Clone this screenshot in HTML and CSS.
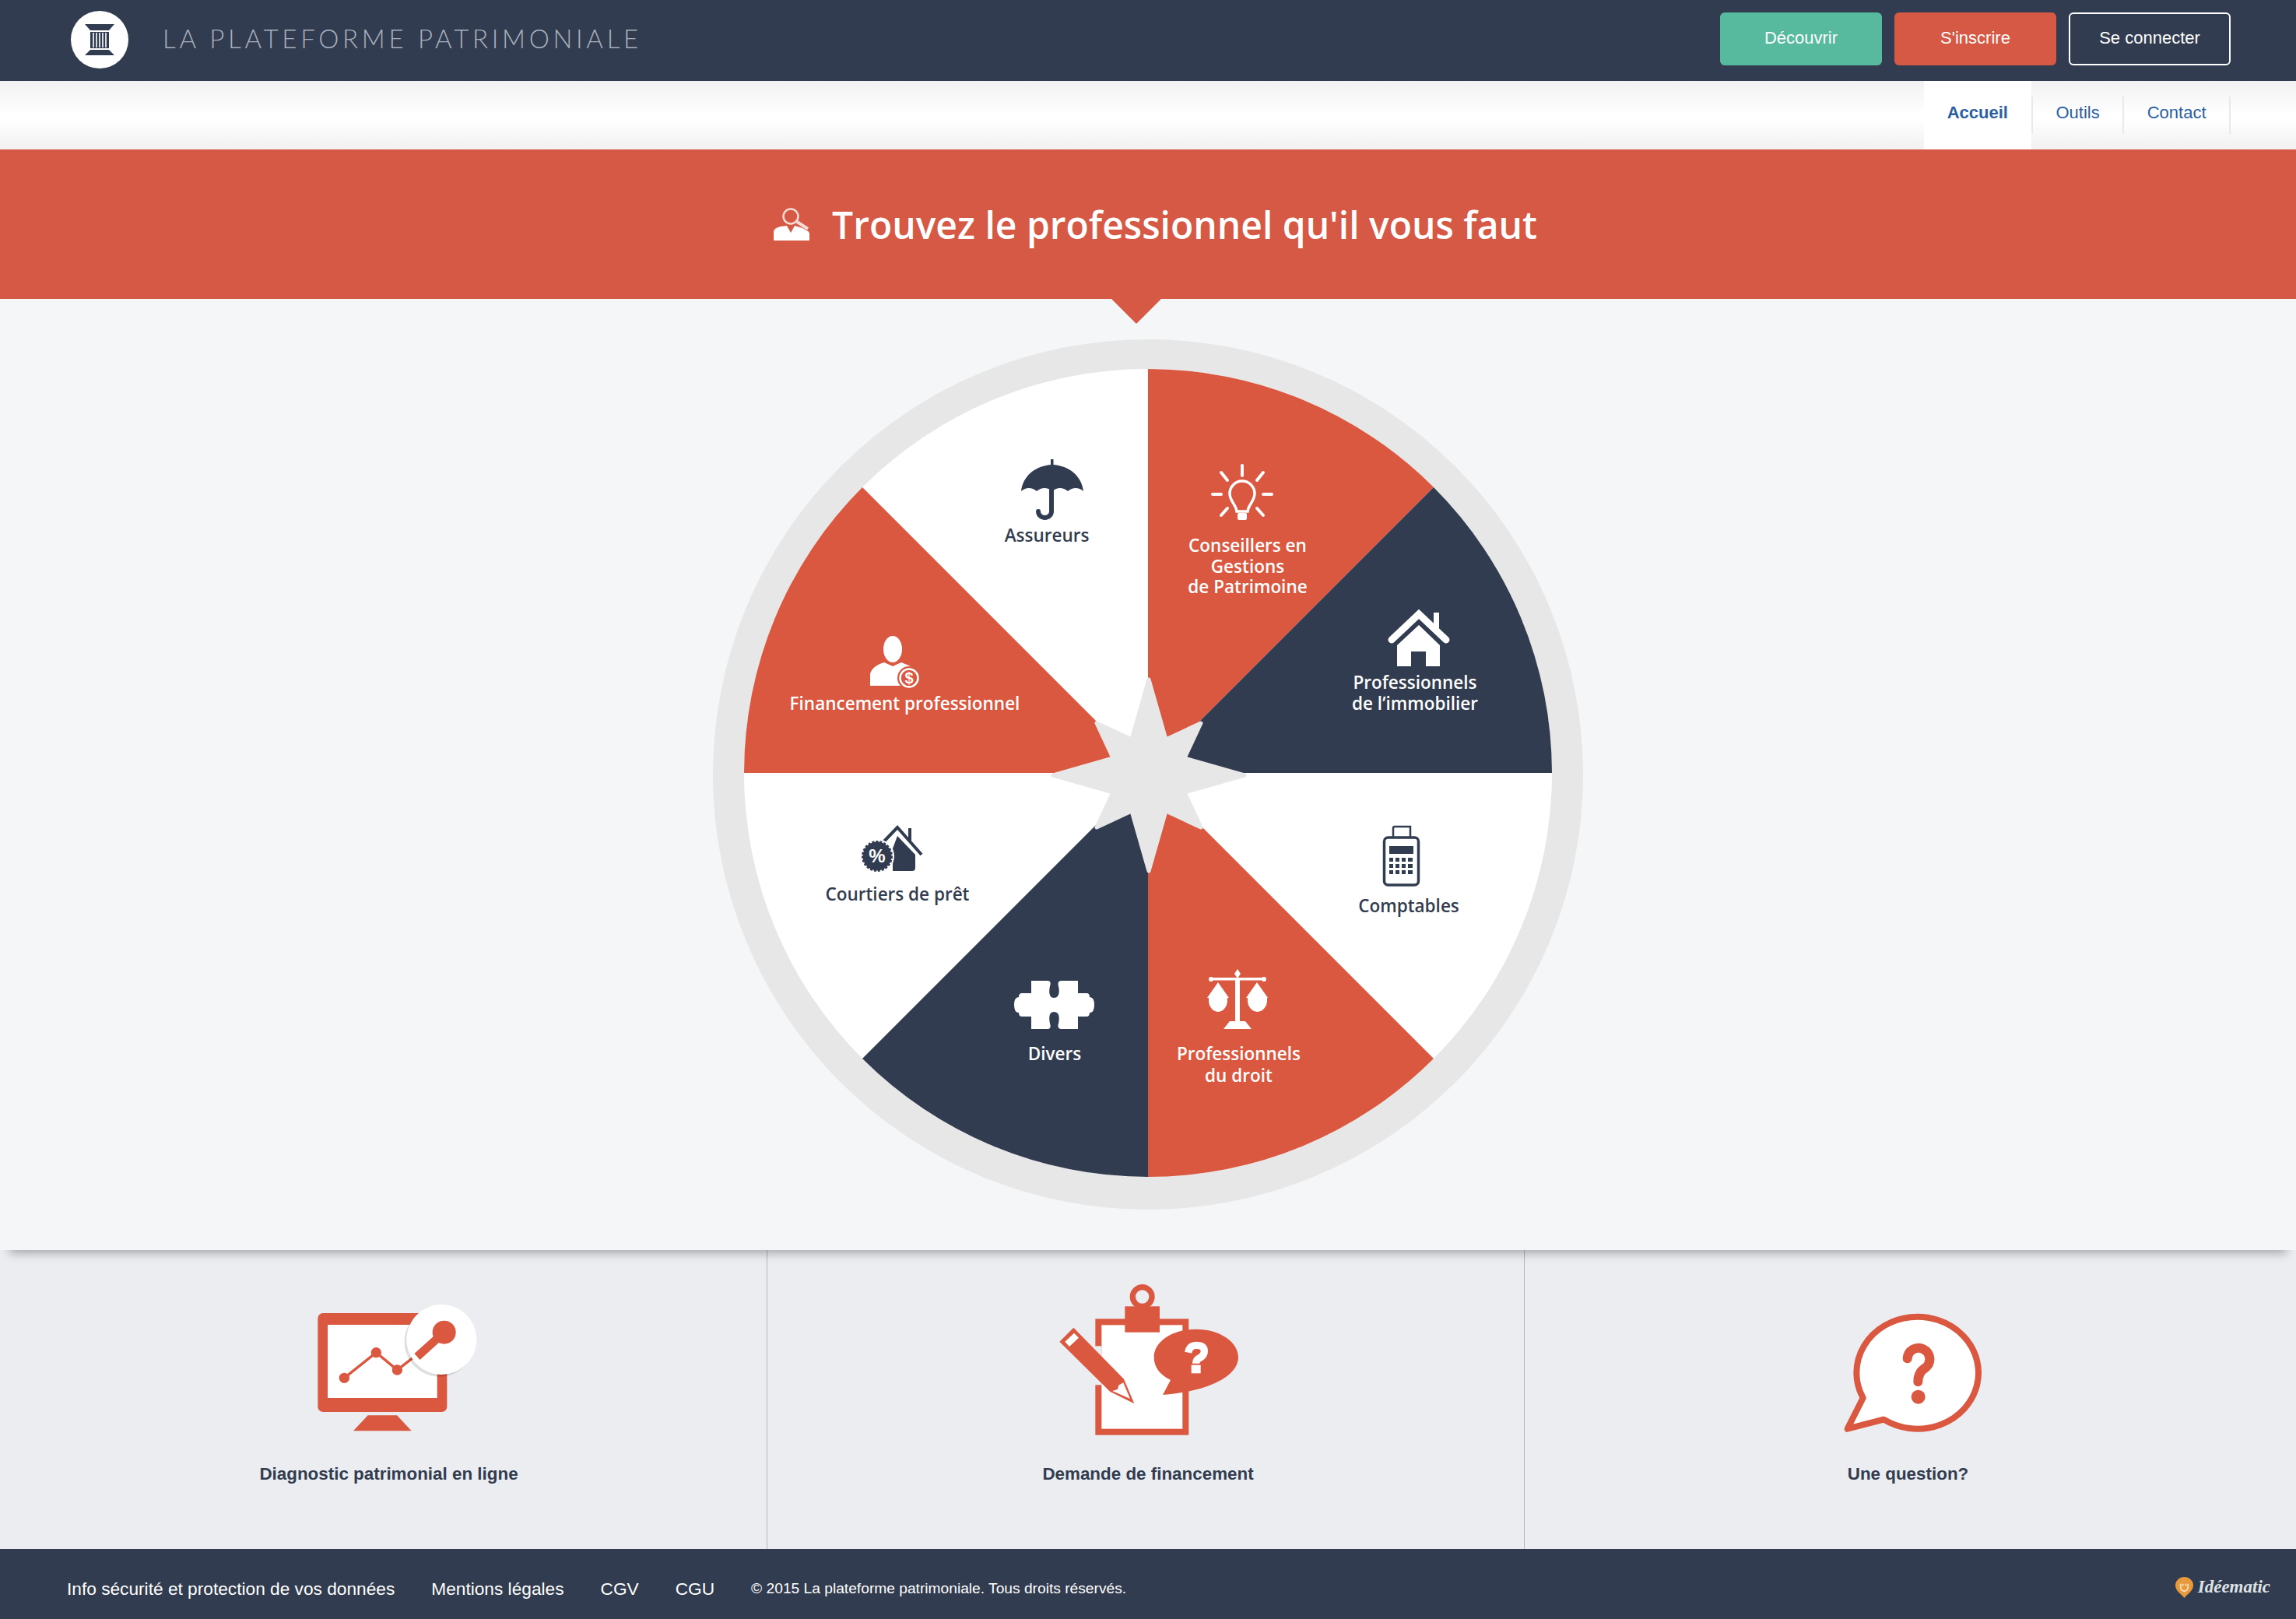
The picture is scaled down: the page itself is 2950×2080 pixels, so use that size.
FILE: index.html
```html
<!DOCTYPE html>
<html lang="fr">

<head>
    <meta charset="UTF-8">
    <title>La plateforme patrimoniale</title>
    <link rel="stylesheet" href="styles.css">
</head>

<body>
    <header class="topbar">
        <a class="brand" href="#">
            <svg class="brand-logo" viewBox="91 14 74 74">
                <circle cx="128" cy="51" r="37" fill="#fff" />
                <polygon points="109,31 147,31 140,39 116,39" fill="#323c50" />
                <rect x="116" y="41" width="24" height="21" fill="#323c50" />
                <path d="M120 42V61M124 42V61M128 42V61M132 42V61M136 42V61" stroke="#fff" stroke-width="1.6" />
                <polygon points="116,64 140,64 147,71 109,71" fill="#323c50" />
            </svg>
            <span class="brand-name">LA PLATEFORME PATRIMONIALE</span>
        </a>
        <div class="actions">
            <a class="btn btn-green" href="#">Découvrir</a>
            <a class="btn btn-red" href="#">S'inscrire</a>
            <a class="btn btn-outline" href="#">Se connecter</a>
        </div>
    </header>

    <nav class="tabs">
        <a class="tab active" href="#">Accueil</a>
        <span class="tab-sep"></span>
        <a class="tab" href="#">Outils</a>
        <span class="tab-sep"></span>
        <a class="tab" href="#">Contact</a>
        <span class="tab-sep"></span>
    </nav>

    <section class="banner">
        <svg class="banner-icon" viewBox="994 272 46 42">
            <circle cx="1016" cy="283" r="9.5" fill="none" stroke="#f7dcd6" stroke-width="2.5" />
            <path d="M1024 290L1038 299" stroke="#f7dcd6" stroke-width="4" />
            <path d="M994 314V303Q994 298 1003 296L1011 295L1016 304L1021 295L1031 298L1036 301Q1040 302 1040 306V314Z" fill="#fff" />
        </svg>
        <h1>Trouvez le professionnel qu'il vous faut</h1>
    </section>

    <main class="wheel-area">
        <svg class="wheel" viewBox="915 435 1120 1120">
            <circle cx="1475" cy="995" r="559" fill="#e7e7e7" />
            <circle cx="1475" cy="993" r="519" fill="#fff" />
            <path class="red" d="M1475 993V474A519 519 0 0 1 1842 626Z" />
            <path class="navy" d="M1475 993L1842 626A519 519 0 0 1 1994 993Z" />
            <path class="red" d="M1475 993V1512A519 519 0 0 0 1842 1360Z" />
            <path class="navy" d="M1475 993V1512A519 519 0 0 1 1108 1360Z" />
            <path class="red" d="M1475 993H956A519 519 0 0 1 1108 626Z" />
            <polygon points="1476,873 1498,950 1543,929 1522,974 1599,996 1522,1018 1543,1063 1498,1042 1476,1119 1454,1042 1409,1063 1430,1018 1353,996 1430,974 1409,929 1454,950" fill="#e7e7e7" stroke="#e7e7e7" stroke-width="5" stroke-linejoin="round" />

            <!-- assureurs -->
            <rect class="navy" x="1350" y="590" width="3.5" height="9" />
            <path class="navy" d="M1312 631C1314 612 1330 598 1352 597C1374 598 1390 612 1392 631Q1382 623 1372 631Q1362 623 1352 631Q1342 623 1332 631Q1322 623 1312 631Z" />
            <path d="M1351 630V657A8.5 8 0 0 1 1334 657" fill="none" stroke="#323c50" stroke-width="6" stroke-linecap="round" />
            <text class="label label-dark" x="1345" y="696">Assureurs</text>

            <!-- conseillers -->
            <path d="M1596 598V611M1623 607L1615 617M1623 635H1634M1615 653L1623 662M1569 607L1577 617M1558 635H1569M1577 653L1569 662" stroke="#fff" stroke-width="4" stroke-linecap="round" />
            <path d="M1589 657C1588 648 1580 644 1580 634A16 16 0 0 1 1612 634C1612 644 1604 648 1603 657Z" fill="none" stroke="#fff" stroke-width="3.5" />
            <rect x="1590" y="659" width="12" height="9" rx="2" fill="#fff" />
            <text class="label" x="1603" y="709">Conseillers en</text>
            <text class="label" x="1603" y="736">Gestions</text>
            <text class="label" x="1603" y="762">de Patrimoine</text>

            <!-- immobilier -->
            <path d="M1788 822L1823 789L1858 822" fill="none" stroke="#fff" stroke-width="9" stroke-linecap="round" />
            <rect x="1842" y="787" width="7" height="22" fill="#fff" />
            <path d="M1823 803L1795 829V856H1813V837H1832V856H1850V829Z" fill="#fff" />
            <text class="label" x="1818" y="885">Professionnels</text>
            <text class="label" x="1818" y="912">de l’immobilier</text>

            <!-- financement -->
            <ellipse cx="1147" cy="834" rx="12" ry="17" fill="#fff" />
            <path d="M1118 881V866Q1120 856 1136 851L1147 856L1158 851L1170 856V881Z" fill="#fff" />
            <circle cx="1168" cy="871" r="15" fill="#da5840" />
            <circle cx="1168" cy="871" r="11.500" fill="none" stroke="#fff" stroke-width="2.500" />
            <text class="coin" x="1168" y="878">$</text>
            <text class="label" x="1162.5" y="912">Financement professionnel</text>

            <!-- courtiers -->
            <path d="M1131 1086L1153 1063L1184 1098" fill="none" stroke="#323c50" stroke-width="4" />
            <rect x="1167" y="1064" width="4" height="16" fill="#323c50" />
            <path class="navy" d="M1153 1074L1176 1098V1115Q1176 1119 1172 1119H1147V1090Z" />
            <circle cx="1127" cy="1100" r="22" fill="#fff" />
            <circle cx="1127" cy="1100" r="18.5" fill="#323c50" stroke="#323c50" stroke-width="3" stroke-dasharray="3 2" />
            <text class="percent" x="1127" y="1108">%</text>
            <text class="label label-dark" x="1153" y="1156.5">Courtiers de prêt</text>

            <!-- comptables -->
            <path d="M1790 1078V1064Q1790 1062 1792 1062H1812V1078" fill="none" stroke="#323c50" stroke-width="2.5" />
            <rect x="1778.5" y="1076" width="44" height="61" rx="5" fill="#fff" stroke="#323c50" stroke-width="3.5" />
            <rect class="navy" x="1785" y="1087" width="31" height="10" />
            <g class="navy">
                <rect x="1785" y="1102" width="5" height="5" /><rect x="1793" y="1102" width="5" height="5" /><rect x="1801" y="1102" width="5" height="5" /><rect x="1809" y="1102" width="6" height="5" />
                <rect x="1785" y="1110" width="5" height="5" /><rect x="1793" y="1110" width="5" height="5" /><rect x="1801" y="1110" width="5" height="5" /><rect x="1809" y="1110" width="6" height="5" />
                <rect x="1785" y="1118" width="5" height="5" /><rect x="1793" y="1118" width="5" height="5" /><rect x="1801" y="1118" width="5" height="5" /><rect x="1809" y="1118" width="6" height="5" />
            </g>
            <text class="label label-dark" x="1810" y="1172">Comptables</text>

            <!-- droit -->
            <path d="M1590 1245L1594 1251L1590 1257L1586 1251Z" fill="#fff" />
            <rect x="1587" y="1257" width="6" height="56" fill="#fff" />
            <rect x="1556" y="1256" width="68" height="3.5" fill="#fff" />
            <circle cx="1556" cy="1258" r="3" fill="#fff" />
            <circle cx="1624" cy="1258" r="3" fill="#fff" />
            <path d="M1565 1262L1551 1282H1553V1285A12 15 0 0 0 1577 1285V1282H1579Z" fill="#fff" />
            <path d="M1615 1262L1601 1282H1603V1285A12.500 15 0 0 0 1628 1285V1282H1629Z" fill="#fff" />
            <path d="M1580 1312H1600L1608 1322H1572Z" fill="#fff" />
            <text class="label" x="1591.500" y="1362">Professionnels</text>
            <text class="label" x="1591.500" y="1390">du droit</text>

            <!-- divers -->
            <path d="M1325 1260H1347Q1351 1261 1349 1267Q1346 1282 1354 1282Q1363 1282 1360 1267Q1358 1261 1363 1260H1385V1276H1396Q1400 1276 1400 1281Q1406 1281 1406 1291Q1406 1301 1400 1301Q1400 1306 1396 1306H1385V1322H1363Q1358 1321 1360 1315Q1363 1300 1354 1300Q1346 1300 1349 1315Q1351 1321 1347 1322H1325V1306H1313Q1309 1306 1309 1301Q1303 1301 1303 1291Q1303 1281 1309 1281Q1309 1276 1313 1276H1325Z" fill="#fff" />
            <text class="label" x="1355" y="1362">Divers</text>
        </svg>
    </main>

    <section class="services">
        <a class="service service-a" href="#">
            <svg class="service-icon" viewBox="0 0 960 660">
                <rect class="red" x="205" y="138" width="498" height="381" rx="20" />
                <rect x="243" y="183" width="422" height="282" fill="#fff" />
                <polygon class="red" points="398,532 510,532 566,592 342,592" />
                <polyline points="307,388 430,290 511,357 590,296" fill="none" stroke="#da5840" stroke-width="10" />
                <circle class="red" cx="307" cy="388" r="20" />
                <circle class="red" cx="430" cy="290" r="20" />
                <circle class="red" cx="511" cy="357" r="20" />
                <circle cx="674" cy="248" r="135" fill="#000" opacity="0.13" />
                <circle cx="682" cy="240" r="135" fill="#fff" />
                <path d="M588 306L692 212" stroke="#da5840" stroke-width="32" />
                <circle class="red" cx="692" cy="212" r="45" />
            </svg>
            <span>Diagnostic patrimonial en ligne</span>
        </a>
        <a class="service service-b" href="#">
            <svg class="service-icon" viewBox="0 60 1050 660">
                <rect x="334" y="232" width="336" height="424" fill="#fff" stroke="#da5840" stroke-width="24" />
                <rect x="318" y="325" width="28" height="150" fill="#ebedf1" />
                <circle cx="503" cy="135" r="37" fill="none" stroke="#da5840" stroke-width="22" />
                <rect class="red" x="436" y="172" width="134" height="100" />
                <path class="red" d="M238 254L184 308L378 500L472 547L432 452Z" />
                <polygon points="240,275 258,293 222,327 205,308" fill="#fff" />
                <path d="M388 498L408 492L412 476L430 466L456 528Z" fill="#fff" />
                <path class="red" d="M710 260C800 260 873 308 873 368C873 440 760 500 582 513L612 456C570 435 548 405 548 368C548 308 620 260 710 260Z" />
                <path d="M680 350Q685 322 712 322Q742 322 742 345Q742 362 722 372Q710 378 710 392" fill="none" stroke="#fff" stroke-width="28" />
                <rect x="692" y="398" width="36" height="32" fill="#fff" />
            </svg>
            <span>Demande de financement</span>
        </a>
        <a class="service service-c" href="#">
            <svg class="service-icon" viewBox="0 -60 906 660">
                <path d="M278 405A235 216 0 1 1 358 488L218 524Z" fill="#fff" stroke="#da5840" stroke-width="24" stroke-linejoin="round" />
                <path d="M449 253A43 43 0 1 1 520 288Q490 305 490 343" fill="none" stroke="#da5840" stroke-width="36" stroke-linecap="round" />
                <circle class="red" cx="491" cy="401" r="27" />
            </svg>
            <span>Une question?</span>
        </a>
    </section>

    <footer class="footer">
        <a href="#">Info sécurité et protection de vos données</a>
        <a href="#">Mentions légales</a>
        <a href="#">CGV</a>
        <a href="#">CGU</a>
        <span class="copyright">© 2015 La plateforme patrimoniale. Tous droits réservés.</span>
        <span class="credit">
            <svg class="credit-pin" viewBox="0 0 24 28">
                <path d="M12 28C8 23 0 19 0 11A12 11 0 0 1 24 11C24 19 16 23 12 28Z" fill="#e8993c" />
                <path d="M7 9V13Q7 18 12 19Q17 18 17 13V9M10 9V12M14 9V12" fill="none" stroke="#f9dcb4" stroke-width="2" />
            </svg>
            <span class="credit-name">Idéematic</span>
        </span>
    </footer>
</body>

</html>
```

FILE: styles.css
```css
* {
    box-sizing: border-box;
}

html,
body {
    margin: 0;
    height: 2080px;
    overflow: hidden;
}

body {
    font-family: 'Liberation Sans', Arial, sans-serif;
    color: #323c50;
    background: #ebedf1;
}

a {
    color: inherit;
    text-decoration: none;
}

.red {
    fill: #da5840;
}

.navy {
    fill: #323c50;
}

/* top bar */
.topbar {
    display: flex;
    align-items: center;
    justify-content: space-between;
    height: 104px;
    padding: 0 84px 4px 91px;
    background: #323c50;
}

.brand {
    display: flex;
    align-items: center;
    gap: 44px;
}

.brand-logo {
    display: block;
    width: 74px;
    height: 74px;
    margin-top: 2px;
}

.brand-name {
    margin-top: -3px;
    font-family: Lato, sans-serif;
    font-weight: 300;
    font-size: 33px;
    letter-spacing: 4.7px;
    color: #a9b0bc;
}

.actions {
    display: flex;
    gap: 16px;
}

.btn {
    display: flex;
    align-items: center;
    justify-content: center;
    width: 208px;
    height: 68px;
    padding-bottom: 2px;
    border-radius: 6px;
    font-size: 22px;
    color: #fff;
}

.btn-green {
    background: #57b99d;
}

.btn-red {
    background: #d55944;
}

.btn-outline {
    border: 2px solid #fff;
}

/* tabs */
.tabs {
    display: flex;
    align-items: center;
    justify-content: flex-end;
    height: 88px;
    padding-right: 84px;
    background: linear-gradient(#f2f2f2, #fff 50%, #fff 55%, #f1f1f1);
}

.tab {
    display: flex;
    align-items: center;
    height: 88px;
    padding: 0 29.5px 6px;
    font-size: 22px;
    color: #2a5fa5;
}

.tab.active {
    padding: 0 30px 6px 30px;
    font-weight: bold;
    background: #fff;
}

.tab-sep {
    width: 2px;
    height: 48px;
    background: #e8eaec;
}

/* red title band */
.banner {
    position: relative;
    z-index: 2;
    display: flex;
    align-items: center;
    justify-content: center;
    gap: 29px;
    height: 192px;
    padding-left: 19px;
    background: #d55944;
    color: #fff;
}

.banner::after {
    content: "";
    position: absolute;
    top: 100%;
    left: calc(50% - 47px);
    border-top: 32px solid #d55944;
    border-left: 32px solid transparent;
    border-right: 32px solid transparent;
}

.banner-icon {
    width: 46px;
    height: 42px;
}

.banner h1 {
    margin: 0;
    font-family: 'Open Sans', sans-serif;
    font-weight: 600;
    font-size: 48px;
    white-space: nowrap;
}

/* wheel */
.wheel-area {
    position: relative;
    z-index: 1;
    display: flex;
    justify-content: center;
    height: 1222px;
    padding-top: 51px;
    background: #f4f6f8;
    box-shadow: 0 16px 12px -12px rgba(0, 0, 0, 0.3);
}

.wheel {
    display: block;
    width: 1120px;
    height: 1120px;
}

.label {
    font-family: 'Open Sans', sans-serif;
    font-weight: 600;
    font-size: 22.5px;
    text-anchor: middle;
    fill: #fff;
}

.label-dark {
    fill: #323c50;
}

.coin {
    font-family: 'Liberation Sans', sans-serif;
    font-weight: bold;
    font-size: 20px;
    text-anchor: middle;
    fill: #fff;
}

.percent {
    font-family: 'Liberation Sans', sans-serif;
    font-weight: bold;
    font-size: 24px;
    text-anchor: middle;
    fill: #fff;
}

/* three links under the wheel */
.services {
    display: grid;
    grid-template-columns: 985px 973px 1fr;
    height: 384px;
}

.service {
    display: flex;
    flex-direction: column;
    align-items: center;
    padding-top: 35px;
    font-weight: bold;
    font-size: 22.4px;
    line-height: 30px;
}

.service-a {
    padding-left: 14px;
}

.service-b {
    padding-left: 6px;
    border-left: 1px solid #b0b6c2;
}

.service-c {
    padding-right: 6px;
    border-left: 1px solid #b0b6c2;
}

.service-icon {
    display: block;
    height: 220px;
    margin-bottom: 18px;
}

.service-a .service-icon {
    width: 320px;
}

.service-b .service-icon {
    width: 350px;
}

.service-c .service-icon {
    width: 302px;
}

/* footer */
.footer {
    display: flex;
    align-items: center;
    gap: 47px;
    height: 90px;
    padding: 12px 33px 0 86px;
    background: #323c50;
    color: #fff;
    font-size: 22.7px;
}

.copyright {
    font-size: 19.2px;
}

.credit {
    display: flex;
    align-items: center;
    gap: 6px;
    margin-left: auto;
    margin-top: -4px;
}

.credit-pin {
    width: 23px;
    height: 27px;
}

.credit-name {
    font-family: 'Liberation Serif', serif;
    font-style: italic;
    font-weight: bold;
    font-size: 23px;
    color: #dfe3e6;
}
```
